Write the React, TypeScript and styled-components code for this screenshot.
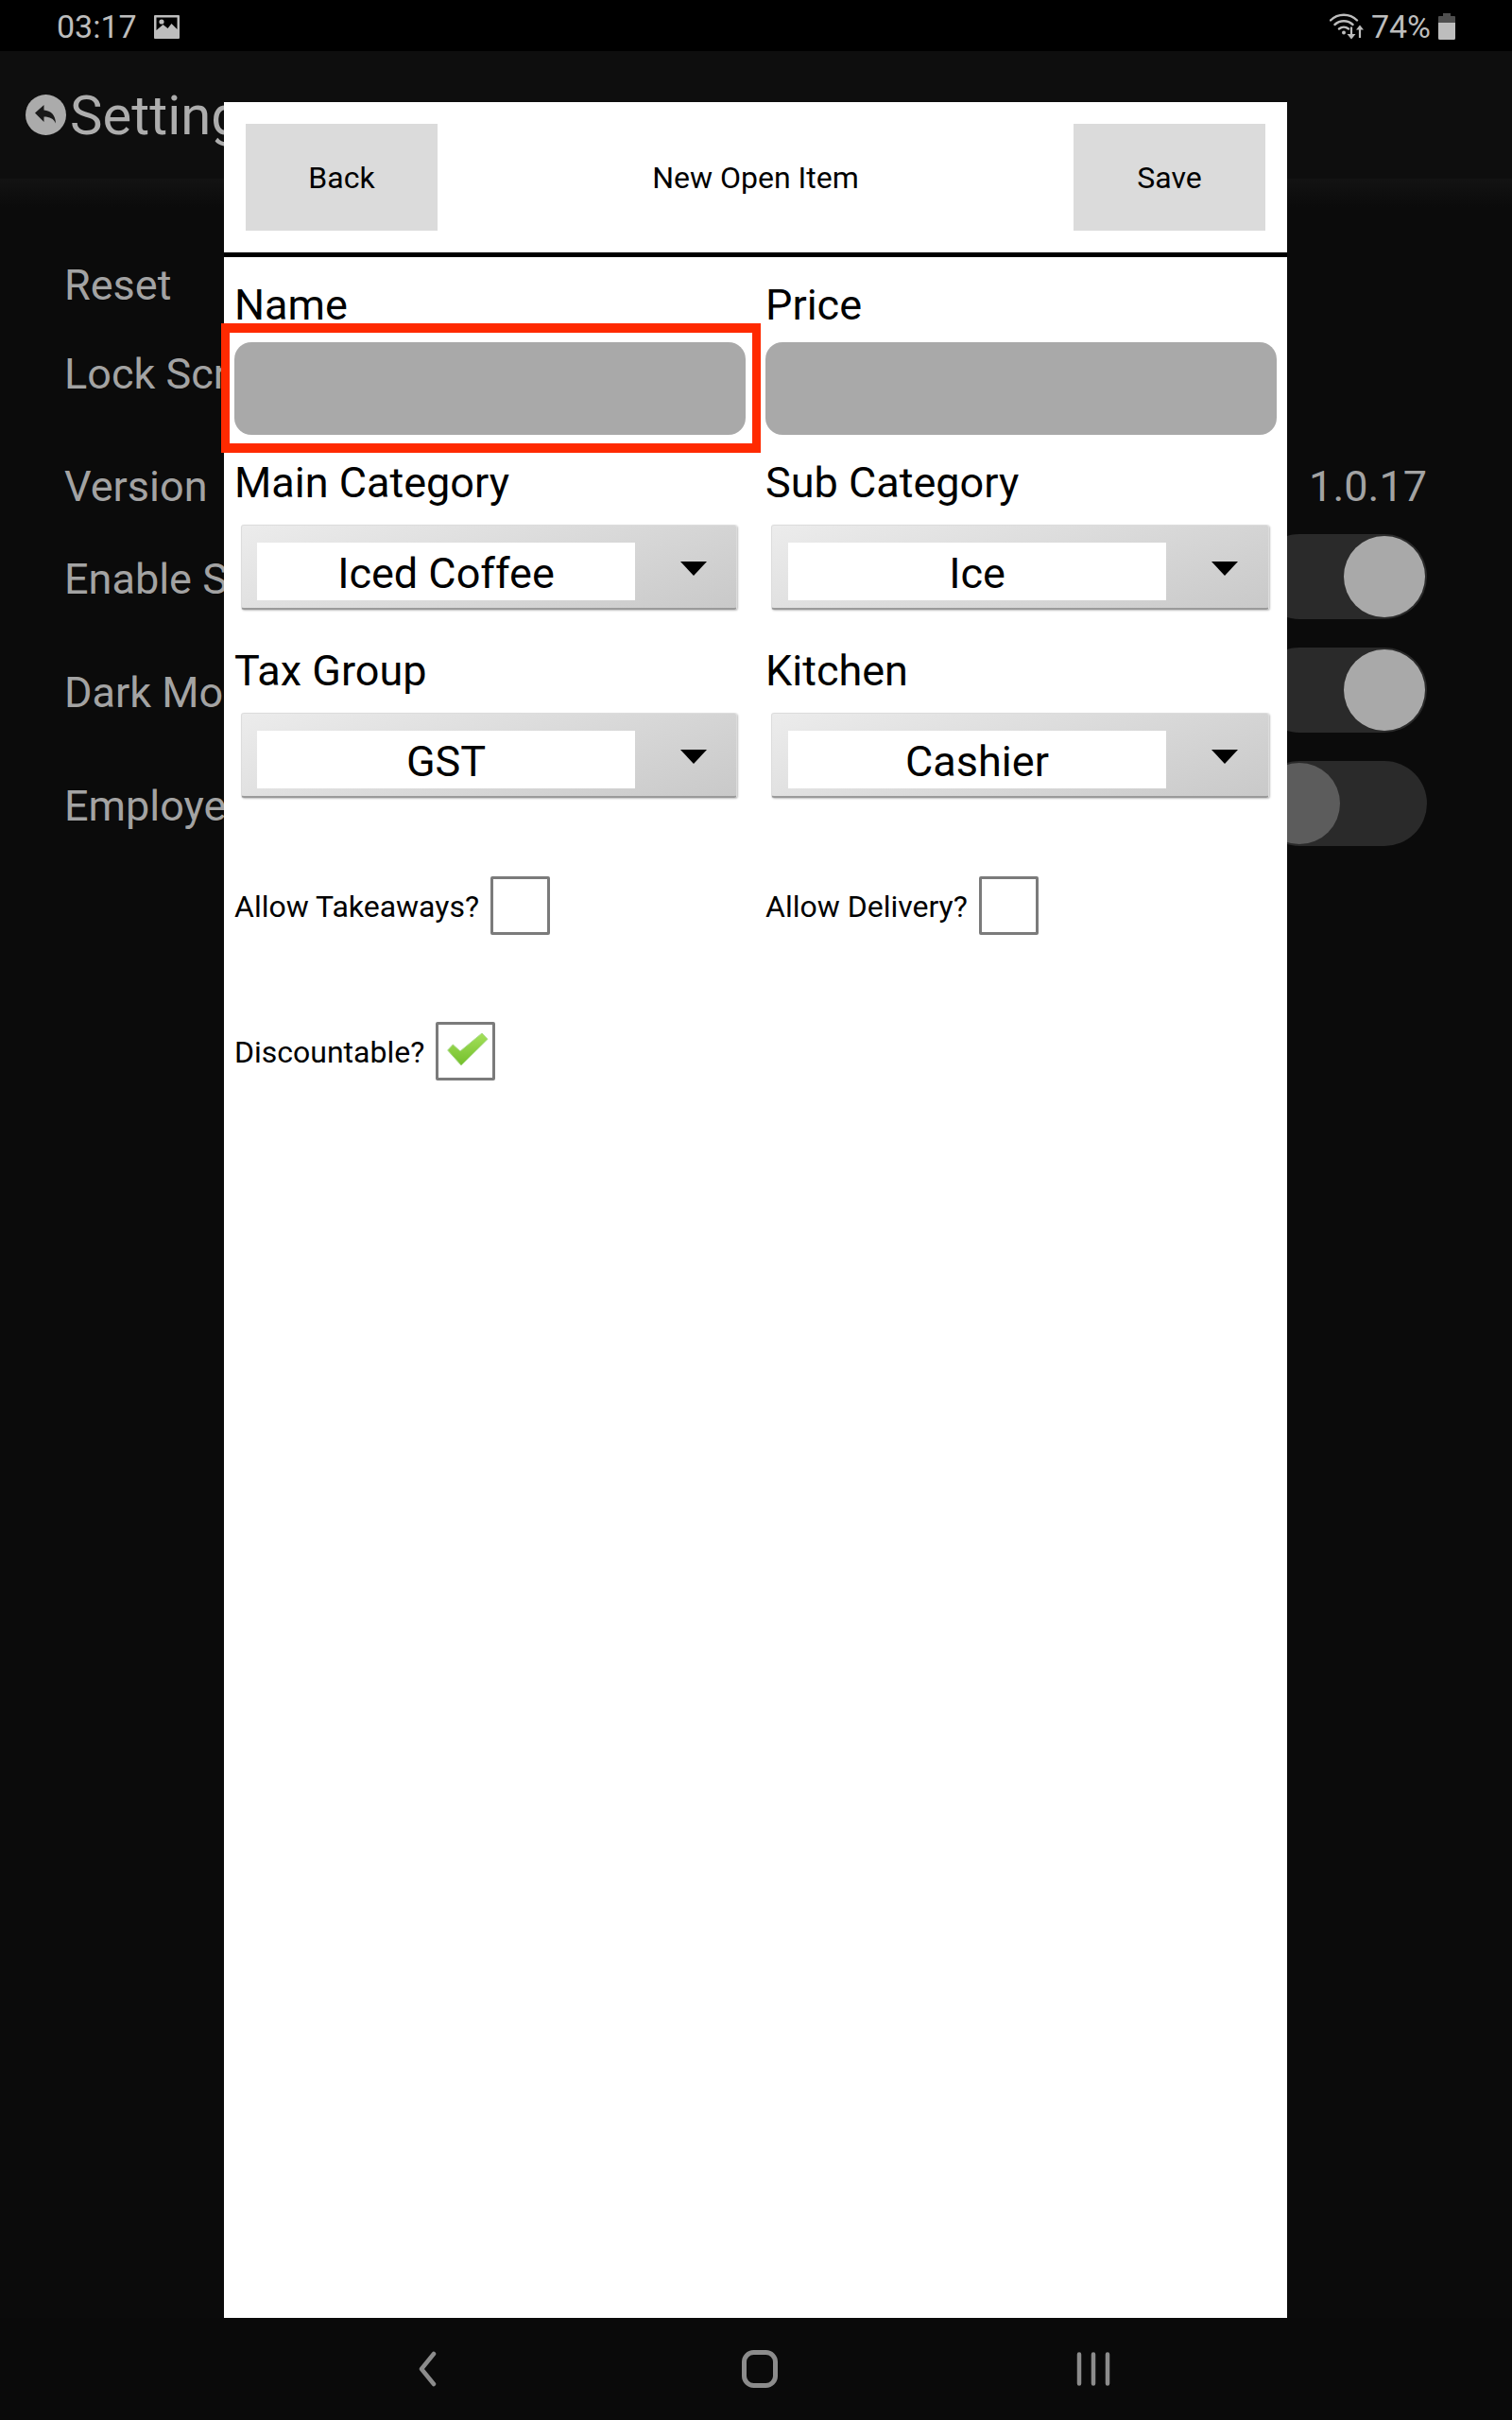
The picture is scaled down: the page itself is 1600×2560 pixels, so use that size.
import styled, { createGlobalStyle } from "styled-components";

const GlobalStyle = createGlobalStyle`
    html, body {
        margin: 0;
        padding: 0;
        background: #0a0a0a;
    }
    * {
        box-sizing: border-box;
    }
`;

const Page = styled.div`
    position: relative;
    display: flex;
    flex-direction: column;
    width: 1600px;
    height: 2560px;
    overflow: hidden;
    background: #0b0b0b;
    font-family: Roboto, "Liberation Sans", sans-serif;
`;

const StatusBar = styled.div`
    display: flex;
    align-items: center;
    justify-content: space-between;
    flex: 0 0 54px;
    padding: 2px 60px 0 60px;
    background: #000;
    color: #bdbdbd;
    font-size: 34px;
`;

const StatusGroup = styled.div<{ $gap: number }>`
    display: flex;
    align-items: center;
    gap: ${(p) => p.$gap}px;
`;

const Header = styled.div`
    display: flex;
    align-items: center;
    flex: 0 0 135px;
    padding-left: 27px;
    gap: 4px;
    background: #0e0e0e;
    color: #adadad;
    font-size: 58px;
`;

const Settings = styled.div`
    flex: 1;
    padding-top: 87px;
    background: linear-gradient(#131313, #0b0b0b 30px);
`;

const SettingRow = styled.div<{ $top?: number; $tall?: boolean }>`
    display: flex;
    align-items: center;
    justify-content: space-between;
    height: ${(p) => (p.$tall ? 120 : 52)}px;
    margin-top: ${(p) => p.$top || 0}px;
    padding: 0 90px 0 68px;
    color: #a3a3a3;
    font-size: 45px;
    line-height: 52px;
`;

const ToggleLabel = styled.span`
    padding-top: 5px;
`;

const Track = styled.div<{ $on?: boolean }>`
    display: flex;
    align-items: center;
    justify-content: ${(p) => (p.$on ? "flex-end" : "flex-start")};
    width: 180px;
    height: 90px;
    padding: 0 2px;
    border-radius: 45px;
    background: #2a2a2a;
`;

const Knob = styled.div<{ $on?: boolean }>`
    width: 86px;
    height: 86px;
    border-radius: 50%;
    background: ${(p) => (p.$on ? "#a9a9a9" : "#5c5c5c")};
`;

const NavBar = styled.div`
    display: grid;
    grid-template-columns: repeat(3, 353px);
    justify-content: center;
    align-items: center;
    justify-items: center;
    flex: 0 0 108px;
    padding: 0 0 0 8px;
    background: #0a0a0a;
`;

// the open dialog sits on top of the settings screen
const Modal = styled.div`
    position: absolute;
    left: 237px;
    top: 108px;
    width: 1125px;
    height: 2344px;
    background: #fff;
    color: #000;
`;

const ModalHeader = styled.div`
    display: flex;
    align-items: center;
    justify-content: space-between;
    height: 164px;
    padding: 0 23px;
    border-bottom: 5px solid #000;
    font-size: 32px;
`;

const HeaderButton = styled.div`
    display: flex;
    align-items: center;
    justify-content: center;
    width: 203px;
    height: 113px;
    background: #dbdbdb;
`;

const Form = styled.div`
    padding: 24px 11px 0;
`;

const FieldGrid = styled.div`
    display: grid;
    grid-template-columns: 541px 541px;
    column-gap: 21px;
`;

const Field = styled.div`
    position: relative;
`;

const Label = styled.div`
    height: 52px;
    font-size: 45px;
    line-height: 53px;
`;

const TextInput = styled.div`
    height: 98px;
    margin: 14px 0 24px;
    border-radius: 18px;
    background: #a9a9a9;
`;

// red annotation drawn over the Name field
const Highlight = styled.div`
    position: absolute;
    left: -14px;
    top: 46px;
    width: 571px;
    height: 137px;
    border-style: solid;
    border-width: 10px 9px;
    border-color: #ff2a00;
`;

const Spinner = styled.div<{ $right?: boolean }>`
    display: flex;
    height: 90px;
    margin: 19px ${(p) => (p.$right ? "8px 38px 6px" : "9px 38px 7px")};
    padding: 18px 0 0 ${(p) => (p.$right ? 17 : 16)}px;
    border: 1px solid #dcdcdc;
    border-bottom: 2px solid #9a9a9a;
    border-radius: 3px;
    background: linear-gradient(160deg, #ececec, #c9c9c9);
    box-shadow: 1px 1px 2px rgba(0, 0, 0, 0.25);
`;

const SpinnerValue = styled.div`
    width: 400px;
    height: 61px;
    background: #fff;
    font-size: 45px;
    line-height: 66px;
    text-align: center;
`;

const SpinnerArrow = styled.div`
    width: 0;
    height: 0;
    margin: 20px 0 0 48px;
    border-left: 14px solid transparent;
    border-right: 14px solid transparent;
    border-top: 15px solid #000;
`;

const CheckGrid = styled(FieldGrid)<{ $top: number }>`
    margin-top: ${(p) => p.$top}px;
`;

const CheckField = styled.div`
    display: flex;
    align-items: center;
    gap: 12px;
    height: 62px;
    font-size: 32px;
`;

const CheckText = styled.span`
    padding-top: 2px;
`;

const CheckBox = styled.div`
    display: flex;
    align-items: center;
    justify-content: center;
    width: 63px;
    height: 62px;
    border: 3px solid #7b7b7b;
    border-radius: 2px;
    background: #fff;
`;

const ImageIcon = () => (
    <svg width="27" height="25" viewBox="0 0 27 25">
        <path fillRule="evenodd" fill="#bdbdbd" d="M1 0h25a1 1 0 0 1 1 1v23a1 1 0 0 1-1 1H1a1 1 0 0 1-1-1V1a1 1 0 0 1 1-1zM2.500 2.500v13.500l7-6 5 4 4-5 6 6V2.500z" />
        <circle cx="8" cy="7" r="2.600" fill="#bdbdbd" />
    </svg>
);

const WifiIcon = () => (
    <svg width="36" height="28" viewBox="0 0 36 28" fill="none" stroke="#bdbdbd">
        <path strokeWidth="2.400" strokeLinecap="round" d="M1 7.500a20 20 0 0 1 28 0M5.500 12a14 14 0 0 1 19 0M10 16.500a8 8 0 0 1 10 0" />
        <circle cx="15" cy="20.500" r="2" fill="#bdbdbd" stroke="none" />
        <path strokeWidth="2.200" d="M23 14.500v10M32 26v-10" />
        <path fill="#bdbdbd" stroke="none" d="M18.500 22h9l-4.500 5.500zM28 17.500h8l-4-5z" />
    </svg>
);

const BatteryIcon = () => (
    <svg width="18" height="28" viewBox="0 0 18 28">
        <path fill="#4f4f4f" d="M5 0h8v3h4a1 1 0 0 1 1 1v6H0V4a1 1 0 0 1 1-1h4z" />
        <path fill="#bdbdbd" d="M0 10h18v16.500a1.500 1.500 0 0 1-1.500 1.500h-15A1.500 1.500 0 0 1 0 26.500z" />
    </svg>
);

const BackCircle = () => (
    <svg width="43" height="43" viewBox="0 0 43 43">
        <circle cx="21.500" cy="21.500" r="21.500" fill="#ababab" />
        <path fill="#1a1a1a" d="M10 19.500 19.500 11v5.500c7.500.500 12 5 12.500 14-2.500-5-6-7-12.500-7V29z" />
    </svg>
);

const CheckMark = () => (
    <svg width="57" height="56" viewBox="3 3 57 56">
        <defs>
            <linearGradient id="tick" x1="0" y1="0" x2="0" y2="1">
                <stop offset="0" stopColor="#a4e05a" />
                <stop offset="1" stopColor="#74bf2c" />
            </linearGradient>
        </defs>
        <path fill="url(#tick)" stroke="#a9d98a" strokeWidth="1" strokeLinejoin="round" d="M12.700 30 18.300 24 26 31 49 12 55 18.300 27 46z" />
    </svg>
);

const NavBack = () => (
    <svg width="24" height="38" viewBox="0 0 24 38" fill="none" stroke="#8c8c8c" strokeWidth="4.500" strokeLinecap="round" strokeLinejoin="round">
        <path d="M20 3 7 19l13 16" />
    </svg>
);

const NavHome = () => (
    <svg width="38" height="40" viewBox="0 0 38 40" fill="none" stroke="#8c8c8c" strokeWidth="5">
        <rect x="2.500" y="2.500" width="33" height="35" rx="10" />
    </svg>
);

const NavRecents = () => (
    <svg width="36" height="36" viewBox="0 0 36 36" fill="none" stroke="#8c8c8c" strokeWidth="4.500" strokeLinecap="round">
        <path d="M3 2.500v31M18 2.500v31M33 2.500v31" />
    </svg>
);

type Choice = { label: string; value: string; right?: boolean };

const Picker = ({ label, value, right }: Choice) => (
    <Field>
        <Label>{label}</Label>
        <Spinner $right={right}>
            <SpinnerValue>{value}</SpinnerValue>
            <SpinnerArrow />
        </Spinner>
    </Field>
);

const Check = ({ label, checked }: { label: string; checked?: boolean }) => (
    <CheckField>
        <CheckText>{label}</CheckText>
        <CheckBox>{checked && <CheckMark />}</CheckBox>
    </CheckField>
);

export default function App() {
    return (
        <Page>
            <GlobalStyle />
            <StatusBar>
                <StatusGroup $gap={18}>
                    <span>03:17</span>
                    <ImageIcon />
                </StatusGroup>
                <StatusGroup $gap={8}>
                    <WifiIcon />
                    <span>74%</span>
                    <BatteryIcon />
                </StatusGroup>
            </StatusBar>
            <Header>
                <BackCircle />
                <span>Settings</span>
            </Header>
            <Settings>
                <SettingRow>Reset</SettingRow>
                <SettingRow $top={42}>Lock Screen</SettingRow>
                <SettingRow $top={67}>
                    <span>Version</span>
                    <span>1.0.17</span>
                </SettingRow>
                <SettingRow $top={9} $tall>
                    <ToggleLabel>Enable Sounds</ToggleLabel>
                    <Track $on><Knob $on /></Track>
                </SettingRow>
                <SettingRow $tall>
                    <ToggleLabel>Dark Mode</ToggleLabel>
                    <Track $on><Knob $on /></Track>
                </SettingRow>
                <SettingRow $tall>
                    <ToggleLabel>Employee Login</ToggleLabel>
                    <Track><Knob /></Track>
                </SettingRow>
            </Settings>
            <NavBar>
                <NavBack />
                <NavHome />
                <NavRecents />
            </NavBar>
            <Modal>
                <ModalHeader>
                    <HeaderButton>Back</HeaderButton>
                    <span>New Open Item</span>
                    <HeaderButton>Save</HeaderButton>
                </ModalHeader>
                <Form>
                    <FieldGrid>
                        <Field>
                            <Label>Name</Label>
                            <TextInput />
                            <Highlight />
                        </Field>
                        <Field>
                            <Label>Price</Label>
                            <TextInput />
                        </Field>
                        <Picker label="Main Category" value="Iced Coffee" />
                        <Picker label="Sub Category" value="Ice" right />
                        <Picker label="Tax Group" value="GST" />
                        <Picker label="Kitchen" value="Cashier" right />
                    </FieldGrid>
                    <CheckGrid $top={45}>
                        <Check label="Allow Takeaways?" />
                        <Check label="Allow Delivery?" />
                    </CheckGrid>
                    <CheckGrid $top={92}>
                        <Check label="Discountable?" checked />
                    </CheckGrid>
                </Form>
            </Modal>
        </Page>
    );
}
